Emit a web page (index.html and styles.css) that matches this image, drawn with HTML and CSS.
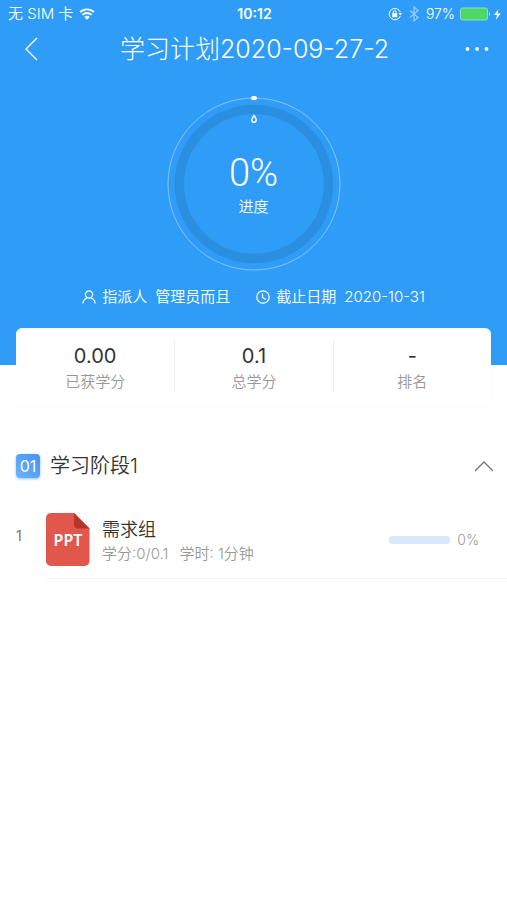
FILE: index.html
```html
<!DOCTYPE html>
<html lang="zh-CN">
<head>
<meta charset="utf-8">
<meta name="viewport" content="width=device-width, initial-scale=1">
<title>学习计划2020-09-27-2</title>
<link rel="stylesheet" href="styles.css">
</head>
<body>
<header class="hero">
  <div class="status">
    <div class="status-left">
      <span>无 SIM 卡</span>
      <svg width="16" height="12" viewBox="0 0 16 12" fill="none" stroke="currentColor" stroke-width="1.8" aria-hidden="true">
        <path d="M1 4.2a10 10 0 0 1 14 0M3.4 6.9a6.5 6.5 0 0 1 9.2 0"/>
        <path d="M8 11.8 5.3 9a3.9 3.9 0 0 1 5.4 0z" fill="currentColor" stroke="none"/>
      </svg>
    </div>
    <span class="time">10:12</span>
    <div class="status-right">
      <svg width="14" height="14" viewBox="0 0 14 14" fill="none" stroke="currentColor" aria-hidden="true">
        <path d="M12.3 5.2A5.7 5.7 0 1 0 12.3 9"/>
        <path d="M10.7 6h3.2l-1.6 2.4z" fill="currentColor" stroke="none"/>
        <path d="M4.2 6.2h5v4h-5z" fill="currentColor" stroke="none"/>
        <path d="M5.2 6.5V5.200a1.500 1.500 0 0 1 3 0v1.300"/>
      </svg>
      <svg class="bluetooth" width="10" height="16" viewBox="0 0 10 16" fill="none" stroke="currentColor" stroke-width="1.200" aria-hidden="true">
        <path d="m1 4.500 8 7L5 15V1l4 3.500-8 7"/>
      </svg>
      <span>97%</span>
      <svg width="41" height="14" viewBox="0 0 41 14" aria-hidden="true">
        <rect x=".5" y="1" width="27" height="12" rx="2" fill="#4cd964" stroke="#8edcd0"/>
        <path d="M29 5q2 2 0 4z" fill="#d4efff"/>
        <path d="M38.500 2 34 8h3l-1.200 4.800 5-6.300h-3.200z" fill="#fff"/>
      </svg>
    </div>
  </div>

  <nav class="nav">
    <button class="icon-button" type="button" aria-label="返回">
      <svg width="14" height="24" viewBox="0 0 14 24" fill="none" stroke="currentColor" stroke-width="1.300"><path d="M13 1 2 12l11 11"/></svg>
    </button>
    <h1>学习计划2020-09-27-2</h1>
    <button class="icon-button" type="button" aria-label="更多">
      <svg width="24" height="4" viewBox="0 0 24 4" fill="currentColor"><circle cx="2.500" cy="2" r="1.900"/><circle cx="12" cy="2" r="1.900"/><circle cx="21.500" cy="2" r="1.900"/></svg>
    </button>
  </nav>

  <div class="gauge">
    <svg class="gauge-ring" width="176" height="176" viewBox="0 0 176 176" fill="none" aria-hidden="true">
      <circle cx="88" cy="88" r="86" stroke="#7fc4fc"/>
      <circle cx="88" cy="88" r="74.500" stroke="#2a8fe0" stroke-width="9.500"/>
      <ellipse cx="88" cy="2" rx="3" ry="2.200" fill="#fff"/>
      <path d="M88 19.500c1.200 1.700 2.200 2.900 2.200 4.600a2.200 2.200 0 0 1-4.400 0c0-1.700 1-2.900 2.200-4.600z" stroke="#fff" stroke-width="1.400"/>
    </svg>
    <div class="gauge-text">
      <strong>0%</strong>
      <span>进度</span>
    </div>
  </div>

  <div class="meta">
    <div class="meta-item">
      <svg width="14" height="14" viewBox="0 0 14 14" fill="none" stroke="currentColor" stroke-width="1.200" aria-hidden="true"><circle cx="7" cy="4.500" r="3.600"/><path d="M.8 13.500c.4-2.700 1.800-4.700 4.200-5.500M13.200 13.500C12.800 10.800 11.400 8.800 9 8"/></svg>
      <span class="meta-label">指派人</span><span>管理员而且</span>
    </div>
    <div class="meta-item">
      <svg width="14" height="14" viewBox="0 0 14 14" fill="none" stroke="currentColor" stroke-width="1.200" aria-hidden="true"><circle cx="7" cy="7" r="6.200"/><path d="M6.500 3.500v4l3.300 2"/></svg>
      <span class="meta-label">截止日期</span><time>2020-10-31</time>
    </div>
  </div>
</header>

<main>
  <dl class="stats">
    <div class="stat"><dt>已获学分</dt><dd>0.00</dd></div>
    <div class="stat"><dt>总学分</dt><dd>0.1</dd></div>
    <div class="stat"><dt>排名</dt><dd>-</dd></div>
  </dl>

  <section>
    <div class="stage">
      <span class="badge">01</span>
      <h2>学习阶段1</h2>
      <button class="icon-button" type="button" aria-label="收起">
        <svg width="20" height="12" viewBox="0 0 20 12" fill="none" stroke="currentColor" stroke-width="1.300"><path d="m1 11 9-9 9 9"/></svg>
      </button>
    </div>
    <ol class="courses">
      <li class="course">
        <span class="index">1</span>
        <div class="course-body">
          <div class="file">
            <svg width="44" height="53" viewBox="0 0 44 53" aria-hidden="true">
              <path d="M5 0h23l15.500 15.500V48a5 5 0 0 1-5 5H5a5 5 0 0 1-5-5V5a5 5 0 0 1 5-5z" fill="#e2574c"/>
              <path d="M28 0v11.500a4 4 0 0 0 4 4h11.500z" fill="#b53629"/>
            </svg>
            <span class="file-type">PPT</span>
          </div>
          <div class="course-text">
            <h3>需求组</h3>
            <p><span>学分:0/0.1</span><span>学时: 1分钟</span></p>
          </div>
          <label class="progress"><progress value="0" max="100"></progress>0%</label>
        </div>
      </li>
    </ol>
  </section>
</main>
</body>
</html>
```
FILE: styles.css
```css
* {
  box-sizing: border-box;
}

body,
h1,
h2,
h3,
p,
dl,
dd,
ol {
  margin: 0;
  padding: 0;
}

body {
  background: #fff;
  color: #333;
  font-family: Inter, "Noto Sans CJK SC", sans-serif;
  font-size: 14px;
  line-height: 20px;
}

svg {
  display: block;
  flex: none;
}

h1,
h2,
h3 {
  font-weight: 350;
}

.hero {
  height: 365px;
  background: #2f9df8;
  color: #fff;
}

.status {
  display: grid;
  grid-template-columns: 1fr auto 1fr;
  align-items: center;
  height: 28px;
  padding: 0 6px 0 8px;
}

.status-left,
.status-right {
  display: flex;
  align-items: center;
  gap: 6px;
}

.status-left {
  font-size: 15px;
  font-weight: 350;
}

.status-right {
  justify-content: flex-end;
  gap: 5px;
  font-weight: 350;
}

.bluetooth {
  margin: 0 2px;
  opacity: 0.5;
}

.time {
  font-weight: 600;
}

.nav {
  display: grid;
  grid-template-columns: 1fr auto 1fr;
  align-items: center;
  height: 42px;
  padding: 0 18px 0 24px;
}

.nav .icon-button:last-child {
  justify-self: end;
}

h1 {
  padding-right: 4px;
  font-size: 25px;
  font-weight: 300;
  line-height: 32px;
}

.icon-button {
  display: flex;
  padding: 0;
  border: 0;
  background: none;
  color: inherit;
}

.gauge {
  display: grid;
  place-items: center;
  margin-top: 26px;
}

.gauge-ring,
.gauge-text {
  grid-area: 1 / 1;
}

.gauge-text {
  display: flex;
  flex-direction: column;
  align-items: center;
  gap: 2px;
  font-size: 15px;
  font-weight: 350;
}

.gauge-text strong {
  font-family: Roboto, sans-serif;
  font-size: 38px;
  font-weight: 350;
  line-height: 44px;
}

.meta {
  display: flex;
  justify-content: center;
  gap: 26px;
  margin-top: 15px;
  font-size: 15px;
  font-weight: 350;
}

.meta-item {
  display: flex;
  align-items: center;
  gap: 6px;
}

.meta-label {
  margin-right: 2px;
}

.stats {
  display: grid;
  grid-template-columns: repeat(3, 1fr);
  margin: -37px 16px 0;
  padding: 12px 0;
  border-radius: 6px;
  background: #fff;
  box-shadow: 0 6px 8px rgba(0, 0, 0, 0.01);
}

.stat {
  display: flex;
  flex-direction: column-reverse;
  gap: 2px;
  padding-top: 2px;
  text-align: center;
}

.stat + .stat {
  border-left: 1px solid #eee;
}

.stat dt {
  color: #999;
  font-size: 15px;
  font-weight: 350;
}

.stat dd {
  font-size: 20px;
  line-height: 28px;
}

.stage {
  display: flex;
  align-items: center;
  gap: 10px;
  height: 70px;
  margin-top: 27px;
  padding: 0 13px 0 16px;
}

.stage .icon-button {
  margin-left: auto;
  color: #777;
}

.badge {
  width: 24px;
  border-radius: 4px;
  background: linear-gradient(45deg, #6db3fb, #4392f7);
  box-shadow: 0 1px 3px #8cc3ff;
  color: #fff;
  font-size: 16px;
  line-height: 24px;
  text-align: center;
}

h2,
h3 {
  font-size: 18px;
  line-height: 28px;
}

h2 {
  font-size: 20px;
}

.courses {
  list-style: none;
}

.course {
  display: flex;
  gap: 22px;
  padding-left: 16px;
}

.index {
  width: 8px;
  padding-top: 25px;
  color: #777;
}

.course-body {
  display: flex;
  flex: 1;
  align-items: center;
  gap: 12px;
  height: 78px;
  padding-right: 28px;
  border-bottom: 1px solid #f5f5f5;
}

.file {
  display: grid;
  place-items: center;
}

.file svg,
.file-type {
  grid-area: 1 / 1;
}

.file-type {
  z-index: 1;
  color: #fff;
  font-family: "Noto Sans", sans-serif;
  font-size: 16px;
  font-weight: 600;
}

.course-text p {
  display: flex;
  gap: 11px;
  color: #999;
  font-size: 15px;
  font-weight: 350;
}

.progress {
  display: flex;
  align-items: center;
  gap: 7px;
  margin-left: auto;
  color: #999;
  font-weight: 350;
}

progress {
  width: 61px;
  height: 8px;
  border: 0;
  border-radius: 4px;
  background: #d9e8fd;
  appearance: none;
}

progress::-webkit-progress-bar {
  border-radius: 4px;
  background: #d9e8fd;
}

progress::-webkit-progress-value {
  border-radius: 4px;
  background: #2f9df8;
}
```
